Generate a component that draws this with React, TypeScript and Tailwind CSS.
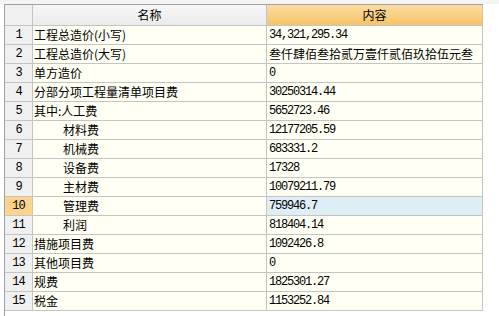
import React from "react";

const rows: { name: string; indent?: boolean; value: string; cjk?: boolean }[] = [
  { name: "工程总造价(小写)", value: "34,321,295.34" },
  { name: "工程总造价(大写)", value: "叁仟肆佰叁拾贰万壹仟贰佰玖拾伍元叁", cjk: true },
  { name: "单方造价", value: "0" },
  { name: "分部分项工程量清单项目费", value: "30250314.44" },
  { name: "其中:人工费", value: "5652723.46" },
  { name: "材料费", indent: true, value: "12177205.59" },
  { name: "机械费", indent: true, value: "683331.2" },
  { name: "设备费", indent: true, value: "17328" },
  { name: "主材费", indent: true, value: "10079211.79" },
  { name: "管理费", indent: true, value: "759946.7" },
  { name: "利润", indent: true, value: "818404.14" },
  { name: "措施项目费", value: "1092426.8" },
  { name: "其他项目费", value: "0" },
  { name: "规费", value: "1825301.27" },
  { name: "税金", value: "1153252.84" },
];

const cjk = { fontFamily: '"Noto Sans CJK SC", sans-serif' };
const mono = { fontFamily: '"Liberation Mono", monospace' };

export default function App() {
  return (
    <div className="w-[499px] h-[316px] bg-white relative overflow-hidden">
      <div className="h-[4px] bg-[#f4f4f4]" />
      <div className="flex">
        <div className="w-[4px] h-[312px] bg-white" />
        <div className="border-t border-l border-[#a0a0a0] w-[479px] text-[12px] text-black">
          {/* header */}
          <div className="flex h-[21px]">
            <div className="w-[28px] border-r border-b border-[#c4c4c4] bg-[#f0f0f0]" />
            <div
              className="w-[234px] border-r border-b border-[#c4c4c4] bg-gradient-to-b from-[#f7f7f7] to-[#ebebeb] flex items-center justify-center leading-none"
              style={cjk}
            >
              名称
            </div>
            <div
              className="w-[216px] border-r border-b border-[#c4c4c4] bg-gradient-to-b from-[#fbdca0] to-[#f6c366] flex items-center justify-center leading-none"
              style={cjk}
            >
              内容
            </div>
          </div>
          {rows.map((r, i) => {
            const sel = i === 9;
            return (
              <div key={i} className="flex h-[19px]">
                <div
                  className={`w-[28px] border-r border-b border-[#c4c4c4] flex items-center justify-center leading-none ${
                    sel ? "bg-[#fcd48c]" : "bg-[#f0f0f0]"
                  }`}
                  style={mono}
                >
                  <span className="text-[12px] tracking-[-1px]">{i + 1}</span>
                </div>
                <div
                  className={`w-[234px] border-r border-b border-[#c4c4c4] bg-[#fffff3] flex items-center leading-none whitespace-nowrap overflow-hidden ${
                    r.indent ? "pl-[30px]" : "pl-[1px]"
                  }`}
                  style={cjk}
                >
                  {r.name}
                </div>
                <div
                  className={`w-[216px] border-r border-b border-[#c4c4c4] flex items-center leading-none whitespace-nowrap overflow-hidden pl-[2px] ${
                    sel ? "bg-[#ddeef7]" : "bg-[#fffff3]"
                  }`}
                  style={r.cjk ? cjk : mono}
                >
                  {r.cjk ? (
                    r.value
                  ) : (
                    <span className="tracking-[-1.2px]">{r.value}</span>
                  )}
                </div>
              </div>
            );
          })}
        </div>
      </div>
    </div>
  );
}
